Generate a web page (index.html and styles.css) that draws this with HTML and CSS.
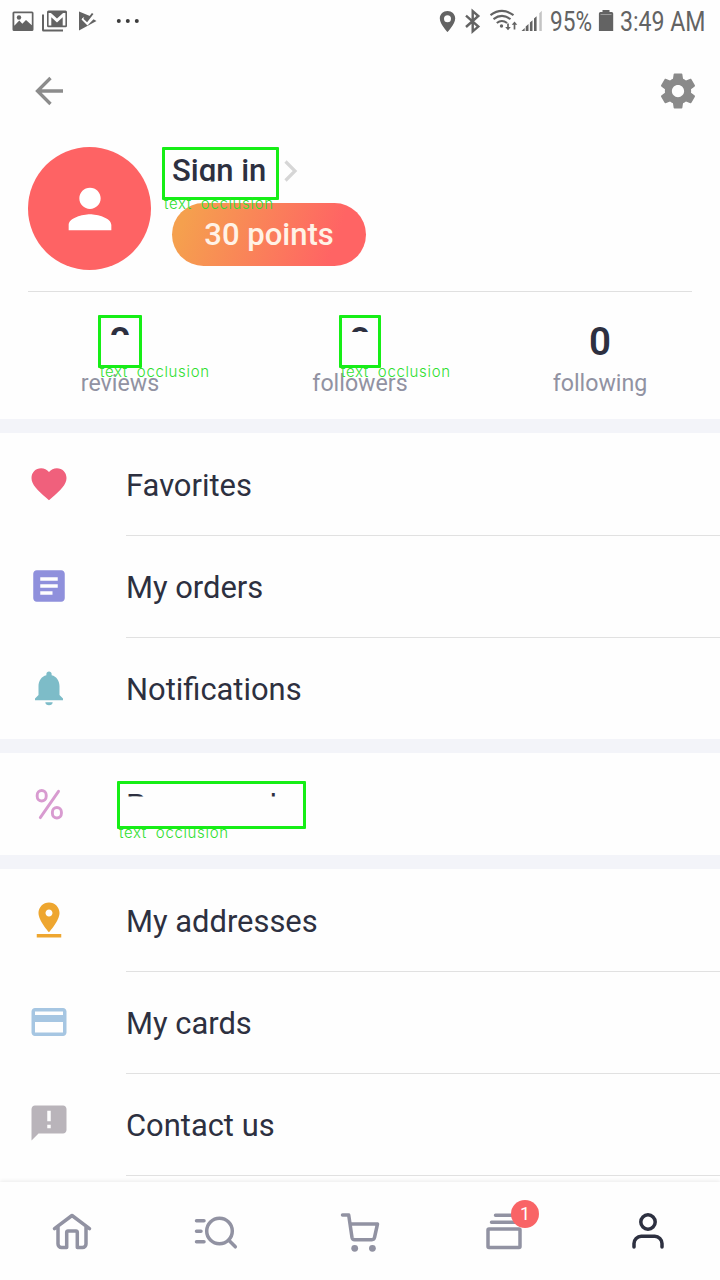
FILE: index.html
```html
<!DOCTYPE html>
<html lang="en">
<head>
<meta charset="utf-8">
<title>Profile</title>
<link rel="stylesheet" href="styles.css">
</head>
<body>
<div class="screen">
  <div class="status">
    <svg width="150" height="42" viewBox="0 0 150 42" fill="#636363">
      <path fill-rule="evenodd" d="M14 11.500h18a1.500 1.500 0 0 1 1.500 1.500v16.500a1.500 1.500 0 0 1-1.500 1.500H14a1.500 1.500 0 0 1-1.500-1.500V13a1.500 1.500 0 0 1 1.500-1.500zM14.300 13.200v12.600l5-5.300 3 3.200 3.700-3.700 5.800 5.300V13.200z"/>
      <circle cx="19" cy="17.500" r="2.200"/>
      <path fill-rule="evenodd" d="M48.500 10.500h17a1.500 1.500 0 0 1 1.500 1.500v13.800a1.500 1.500 0 0 1-1.500 1.500h-17a1.500 1.500 0 0 1-1.500-1.500V12a1.500 1.500 0 0 1 1.500-1.500zM48.600 13v12.600h2.700v-8.300l5.700 5.200 5.700-5.200v8.300h2.700V13h-2.300L57 18.600 50.900 13z"/>
      <path d="M42 14.500h2V29.500h19v2H43.500a1.500 1.500 0 0 1-1.500-1.500z"/>
      <path d="M79 11.500v19L96.500 21l-3-1.700-6 6.200-6-6 2.200-2.300 3.600 3.300 3.200-4.300z"/>
      <path d="M82.500 18.300l4.300 4.500 6-8.800" fill="none" stroke="#fff" stroke-width="1.500"/>
      <path d="M84 18l3 2.800 5.700-7.300" fill="none" stroke="#636363" stroke-width="2"/>
      <g fill="#3c3c3c"><circle cx="118.800" cy="21" r="2"/><circle cx="127.800" cy="21" r="2"/><circle cx="136.800" cy="21" r="2"/></g>
    </svg>
    <svg width="290" height="42" viewBox="430 0 290 42" fill="#636363">
      <path fill-rule="evenodd" d="M447.500 11c-4.300 0-7.700 3.200-7.700 7.400 0 5.500 7.700 13.600 7.700 13.600s7.700-8.100 7.700-13.600c0-4.200-3.400-7.400-7.700-7.400zm0 4.200a3.500 3.500 0 1 1 0 7 3.500 3.500 0 0 1 0-7z"/>
      <path d="M466 15.700l12.300 10.900-5.600 4.800V11.200l5.600 4.800L466 27" fill="none" stroke="#636363" stroke-width="2.400"/>
      <g fill="none" stroke="#636363" stroke-width="2.100">
        <path d="M490.500 15.200q11.500-8.500 23 0M493.500 19.200q8.500-6.500 17 0M496.800 23q5-4 10.300 0"/>
        <path d="M508 23.500v5.500M514.500 24v5.500" stroke-width="1.700"/>
      </g>
      <circle cx="501.500" cy="26" r="1.700"/>
      <path d="M505.200 27h5.600L508 30.300zM511.700 24.800h5.600l-2.800-3.300z"/>
      <path d="M521.500 31l3.200-3v3zM525.700 26.500l2.800-2.500v7h-2.800zM529.900 22.500l2.600-2.300V31h-2.600zM534 18.500l2.600-2.300V31H534z"/>
      <path d="M539.300 13.300l2.500-2.500V31h-2.500z" fill="#c4c4c4"/>
      <text class="status-text" x="550" y="31.200" textLength="42" lengthAdjust="spacingAndGlyphs">95%</text>
      <path d="M602.500 10h7v2h2.200a1.500 1.500 0 0 1 1.500 1.500V31h-14.300V13.500a1.500 1.500 0 0 1 1.500-1.500h2.100z"/>
      <path d="M600.500 14.500h11" stroke="#aaa" stroke-width=".8"/>
      <text class="status-text" x="620" y="31.200" textLength="85.500" lengthAdjust="spacingAndGlyphs">3:49 AM</text>
    </svg>
  </div>

  <header class="topbar">
    <svg width="42" height="42" viewBox="0 0 42 42" fill="none" stroke="#8c8c8c" stroke-width="3.300"><path d="M35 21H9M22.500 8L9.500 21l13 13"/></svg>
    <svg width="42" height="42" viewBox="0 0 24 24" fill="#8a8a8a"><path d="M19.430 12.980c.04-.32.070-.64.070-.98s-.03-.66-.07-.98l2.110-1.650c.19-.15.240-.42.120-.64l-2-3.460c-.12-.22-.39-.3-.61-.22l-2.490 1c-.52-.4-1.080-.73-1.690-.98l-.38-2.650C14.460 2.180 14.250 2 14 2h-4c-.25 0-.46.180-.49.420l-.38 2.650c-.61.250-1.170.59-1.690.98l-2.490-1c-.23-.09-.49 0-.61.220l-2 3.460c-.13.220-.07.49.12.64l2.110 1.650c-.04.320-.07.650-.07.980s.03.660.070.980l-2.110 1.650c-.19.150-.24.420-.12.640l2 3.460c.12.220.39.300.61.220l2.490-1c.52.400 1.080.730 1.690.980l.38 2.650c.03.240.24.420.49.420h4c.25 0 .46-.18.490-.42l.38-2.650c.61-.25 1.170-.59 1.690-.98l2.490 1c.23.090.49 0 .61-.22l2-3.460c.12-.22.070-.49-.12-.64l-2.110-1.650zM12 15.500c-1.930 0-3.500-1.570-3.500-3.500s1.570-3.500 3.500-3.500 3.500 1.570 3.500 3.500-1.570 3.500-3.500 3.500z"/></svg>
  </header>

  <section class="profile">
    <div class="avatar">
      <svg width="64" height="64" viewBox="0 0 24 24" fill="#fff"><path d="M12 12c2.210 0 4-1.790 4-4s-1.790-4-4-4-4 1.790-4 4 1.790 4 4 4zm0 2c-2.670 0-8 1.340-8 4v2h16v-2c0-2.660-5.330-4-8-4z"/></svg>
    </div>
    <div class="identity">
      <div class="signin">
        <span class="signin-text">Sign in</span>
        <svg width="14" height="22" viewBox="0 0 14 22" fill="none" stroke="#d6d6d6" stroke-width="3.200"><path d="M1.500 1.500L11 11l-9.500 9.500"/></svg>
        <div class="mark mark-signin"><span>text occlusion</span></div>
      </div>
      <div class="points">30 points</div>
    </div>
  </section>

  <section class="stats">
    <div class="stat"><b class="cut-a">0</b><span>reviews</span><div class="mark mark-reviews"><span>text occlusion</span></div></div>
    <div class="stat"><b class="cut-b">0</b><span>followers</span><div class="mark mark-followers"><span>text occlusion</span></div></div>
    <div class="stat"><b>0</b><span>following</span></div>
  </section>

  <nav class="menu">
    <div class="group">
      <div class="row"><svg class="icon" viewBox="0 0 24 24" fill="#f0607c"><path d="M12 21.350l-1.450-1.320C5.400 15.360 2 12.280 2 8.500 2 5.420 4.420 3 7.500 3c1.740 0 3.410.810 4.500 2.090C13.090 3.810 14.760 3 16.500 3 19.580 3 22 5.420 22 8.500c0 3.780-3.400 6.860-8.550 11.540L12 21.350z"/></svg><div class="label"><span>Favorites</span></div></div>
      <div class="row"><svg class="icon" viewBox="0 0 24 24" fill="#8f90dc"><path d="M19 3H5c-1.100 0-2 .9-2 2v14c0 1.100.9 2 2 2h14c1.100 0 2-.9 2-2V5c0-1.100-.9-2-2-2zm-5 14H7v-2h7v2zm3-4H7v-2h10v2zm0-4H7V7h10v2z"/></svg><div class="label"><span>My orders</span></div></div>
      <div class="row"><svg class="icon" viewBox="0 0 24 24" fill="#7dbcc8"><path d="M9.900 20.200h4.200c0 1-.9 1.700-2.100 1.700s-2.100-.7-2.100-1.700zM18 16v-5c0-3.070-1.640-5.640-4.500-6.320V4c0-.83-.67-1.500-1.500-1.500s-1.500.67-1.500 1.500v.680C7.630 5.360 6 7.920 6 11v5l-2 2v1h16v-1l-2-2z"/></svg><div class="label"><span>Notifications</span></div></div>
    </div>
    <div class="group">
      <div class="row"><svg class="icon" viewBox="0 0 42 42" fill="none" stroke="#d89bd0" stroke-width="2.900" stroke-linecap="round"><rect x="9.200" y="7.500" width="9" height="10.500" rx="4.500"/><rect x="24.400" y="24.500" width="9" height="10.500" rx="4.500"/><path d="M30.500 8.300L12.300 34.600"/></svg><div class="label"><span class="cut-promo">Promo code</span></div><div class="mark mark-promo"><span>text occlusion</span></div></div>
    </div>
    <div class="group">
      <div class="row"><svg class="icon" viewBox="0 0 24 24" fill="#eea62f"><path d="M18 8c0-3.310-2.690-6-6-6S6 4.690 6 8c0 4.500 6 11 6 11s6-6.500 6-11zm-8 0c0-1.100.9-2 2-2s2 .9 2 2-.89 2-2 2c-1.100 0-2-.9-2-2zM5 20v2h14v-2H5z"/></svg><div class="label"><span>My addresses</span></div></div>
      <div class="row"><svg class="icon" viewBox="0 0 24 24" fill="#a6c6e2"><path d="M20 4H4c-1.110 0-1.990.89-1.990 2L2 18c0 1.110.890 2 2 2h16c1.110 0 2-.89 2-2V6c0-1.110-.89-2-2-2zm0 14H4v-6h16v6zm0-10H4V6h16v2z"/></svg><div class="label"><span>My cards</span></div></div>
      <div class="row"><svg class="icon" viewBox="0 0 24 24" fill="#b9b4ba"><path d="M20 2H4c-1.100 0-1.990.9-1.990 2L2 22l4-4h14c1.100 0 2-.9 2-2V4c0-1.100-.9-2-2-2zm-7 13h-2v-2h2v2zm0-4h-2V5h2v6z"/></svg><div class="label"><span>Contact us</span></div></div>
    </div>
  </nav>

  <footer class="tabs">
    <svg viewBox="0 0 48 48"><path d="M6.500 22.700L24 9.500l17.500 13.200M10 20.800V38a3.500 3.500 0 0 0 3.500 3.500h5.200V26.200a1.200 1.200 0 0 1 1.200-1.200h8.200a1.200 1.200 0 0 1 1.200 1.200v15.300h5.200A3.500 3.500 0 0 0 38 38V20.800"/></svg>
    <svg viewBox="0 0 48 48"><circle cx="27.500" cy="25" r="12.800"/><path d="M36.800 34.300l6.500 6.500M4.500 14.700H12M4.500 25.200H9M4.500 35.700H12"/></svg>
    <svg viewBox="0 0 48 48"><path d="M6.500 9h6.200L16 31.500a2.700 2.700 0 0 0 2.700 2.200h17.200a2.700 2.700 0 0 0 2.600-2.200L41.500 18H14"/><circle cx="18.700" cy="42.300" r="3.400" class="wheel"/><circle cx="36.400" cy="42.300" r="3.400" class="wheel"/></svg>
    <div class="tab-badged">
      <svg viewBox="0 0 48 48"><path d="M15.500 9.300h17M11.500 16.300h25"/><rect x="8" y="23" width="32" height="18.500" rx="1"/></svg>
      <span class="badge">1</span>
    </div>
    <svg class="active" viewBox="0 0 48 48"><circle cx="24" cy="16" r="7.200"/><path d="M10 41v-3.500A7.200 7.200 0 0 1 17.200 30.300h13.600A7.200 7.200 0 0 1 38 37.500V41"/></svg>
  </footer>
</div>
</body>
</html>
```

FILE: styles.css
```css
* { box-sizing: border-box; }

body {
  margin: 0;
  font-family: Roboto, "Liberation Sans", sans-serif;
  color: #2d3040;
  background: #fff;
}

svg { display: block; flex: none; }

.screen {
  display: flex;
  flex-direction: column;
  width: 720px;
  height: 1280px;
  overflow: hidden;
  background: #fefefe;
}

.status {
  flex: none;
  display: flex;
  justify-content: space-between;
  height: 42px;
}

.status-text { font-size: 27px; fill: #636363; }

.topbar {
  flex: none;
  display: flex;
  justify-content: space-between;
  align-items: center;
  height: 98px;
  padding: 0 21px 0 28px;
}

.profile {
  flex: none;
  display: flex;
  gap: 21px;
  height: 152px;
  margin: 0 28px;
  padding-top: 7px;
  border-bottom: 1px solid #e0e0e0;
}

.avatar {
  display: grid;
  place-items: center;
  width: 123px;
  height: 123px;
  border-radius: 50%;
  background: #fe6364;
}

.signin {
  position: relative;
  display: flex;
  align-items: center;
  gap: 18px;
  height: 56px;
  padding-bottom: 9px;
}

.signin-text {
  font-size: 31px;
  font-weight: 550;
  line-height: 36px;
  clip-path: inset(0 0 7px 0);
}

.points {
  display: grid;
  place-items: center;
  width: 194px;
  height: 63px;
  border-radius: 32px;
  font-size: 31px;
  font-weight: 500;
  color: #fff2e6;
  background: linear-gradient(110deg, #f5a04e 8%, #ff6464 82%);
}

.stats {
  flex: none;
  display: grid;
  grid-template-columns: repeat(3, 240px);
  height: 127px;
  padding-top: 27px;
}

.stat {
  position: relative;
  display: flex;
  flex-direction: column;
  align-items: center;
}

.stat b {
  font-size: 38.500px;
  font-weight: 600;
  line-height: 46px;
}

.stat > span {
  margin-top: 4px;
  font-size: 23.200px;
  line-height: 28px;
  color: #9192a2;
}

.cut-a { clip-path: inset(0 0 30px 0); }
.cut-b { clip-path: inset(0 0 33px 0); }

.menu {
  flex: none;
  display: flex;
  flex-direction: column;
  height: 763px;
}

.group { border-top: 14px solid #f3f4f9; }

.row {
  position: relative;
  display: flex;
  gap: 56px;
  align-items: center;
  height: 102px;
  padding-left: 28px;
}

.icon { width: 42px; height: 42px; }

.label {
  flex: 1;
  display: flex;
  align-items: center;
  height: 102px;
  padding-top: 3px;
  font-size: 30.900px;
  line-height: 36px;
}

.row + .row .label { border-top: 1px solid #e1e1e1; }
.group:last-child { flex: 1; }
.group:last-child .row:last-child { height: 103px; }
.group:last-child .row:last-child .icon { margin-bottom: 3px; }
.group:last-child .row:last-child .label { height: 103px; border-bottom: 1px solid #e1e1e1; }

.cut-promo { clip-path: inset(0 0 27px 0); }

.mark {
  position: absolute;
  border: 3px solid #16ee16;
  border-radius: 1px;
}

.mark span {
  position: absolute;
  left: -1px;
  bottom: -15px;
  font-family: Inter, sans-serif;
  font-size: 15px;
  font-weight: 300;
  line-height: 16px;
  letter-spacing: .65px;
  word-spacing: 4px;
  white-space: nowrap;
  color: #2fe02f;
}

.mark-signin { left: -10px; top: 0; width: 117px; height: 53px; }
.mark-reviews { left: 98px; top: -4px; width: 44px; height: 53px; }
.mark-followers { left: 99px; top: -4px; width: 42px; height: 53px; }
.mark-promo { left: 117px; top: 28px; width: 189px; height: 48px; }

.tabs {
  flex: 1;
  position: relative;
  display: grid;
  grid-template-columns: repeat(5, 144px);
  justify-items: center;
  padding-top: 24px;
  background: #fefefe;
  box-shadow: 0 -1px 4px rgba(0, 0, 0, .08);
}

.tabs svg {
  width: 48px;
  height: 48px;
  fill: none;
  stroke: #9192a2;
  stroke-width: 3.500;
  stroke-linecap: round;
  stroke-linejoin: round;
}

.tabs .active { stroke: #2d3040; }
.tabs .wheel { fill: #9192a2; stroke: none; }

.tab-badged { position: relative; }

.badge {
  position: absolute;
  left: 31px;
  top: -6px;
  width: 28px;
  height: 28px;
  border-radius: 50%;
  font-size: 18px;
  line-height: 28px;
  text-align: center;
  color: #fff;
  background: #f96466;
}
```
